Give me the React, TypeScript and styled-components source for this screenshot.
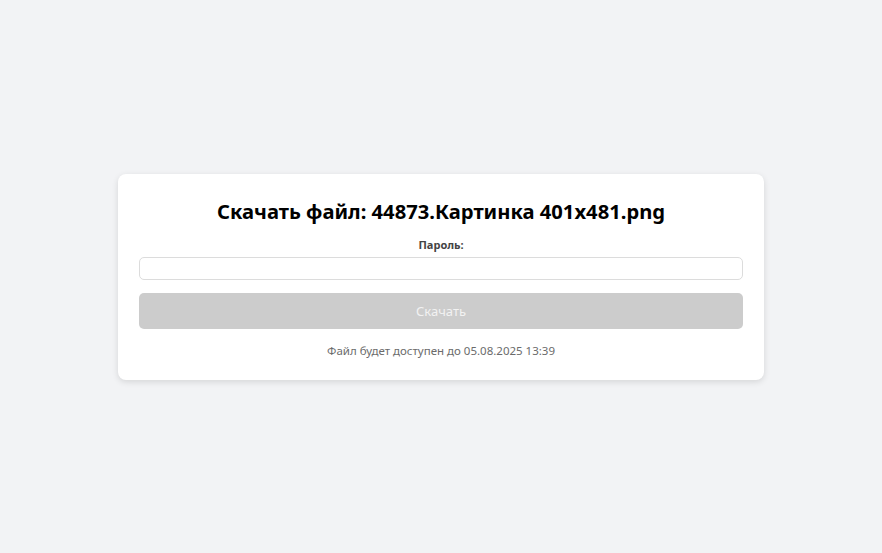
import React from "react";
import styled, { createGlobalStyle } from "styled-components";

const GlobalStyle = createGlobalStyle`
  html, body { margin: 0; padding: 0; }
  body {
    background: #f2f3f5;
    font-family: "Noto Sans", "Open Sans", Arial, sans-serif;
  }
`;

const Page = styled.div`
  width: 100vw;
  height: 100vh;
  display: flex;
  align-items: center;
  justify-content: center;
`;

const Card = styled.div`
  box-sizing: border-box;
  width: 646px;
  background: #ffffff;
  border-radius: 8px;
  box-shadow: 0 2px 6px rgba(0, 0, 0, 0.12);
  padding: 21px 21px 21px;
  display: flex;
  flex-direction: column;
  align-items: stretch;
`;

const Title = styled.h2`
  margin: 2px 0 0;
  text-align: center;
  font-size: 20.2px;
  font-weight: 700;
  color: #000;
  line-height: 28px;
`;

const Label = styled.label`
  margin-top: 12px;
  text-align: center;
  font-size: 11px;
  font-weight: 700;
  color: #444;
  line-height: 16px;
`;

const Input = styled.input`
  box-sizing: border-box;
  margin-top: 4px;
  height: 23px;
  width: 100%;
  border: 1px solid #dcdcdc;
  border-radius: 5px;
  background: #fff;
  outline: none;
`;

const Button = styled.button<{ $disabled?: boolean }>`
  margin-top: 13px;
  height: 36px;
  width: 100%;
  border: none;
  border-radius: 5px;
  background: ${(p) => (p.$disabled ? "#cccccc" : "#2563eb")};
  color: ${(p) => (p.$disabled ? "#f2f2f2" : "#fff")};
  font-family: inherit;
  font-size: 13px;
`;

const Note = styled.p`
  margin: 14px 0 0;
  text-align: center;
  font-size: 11.5px;
  color: #6b6b6b;
  line-height: 16px;
`;

export default function App() {
  return (
    <>
      <GlobalStyle />
      <Page>
        <Card>
          <Title>Скачать файл: 44873.Картинка 401x481.png</Title>
          <Label>Пароль:</Label>
          <Input type="password" />
          <Button $disabled disabled>Скачать</Button>
          <Note>Файл будет доступен до 05.08.2025 13:39</Note>
        </Card>
      </Page>
    </>
  );
}
